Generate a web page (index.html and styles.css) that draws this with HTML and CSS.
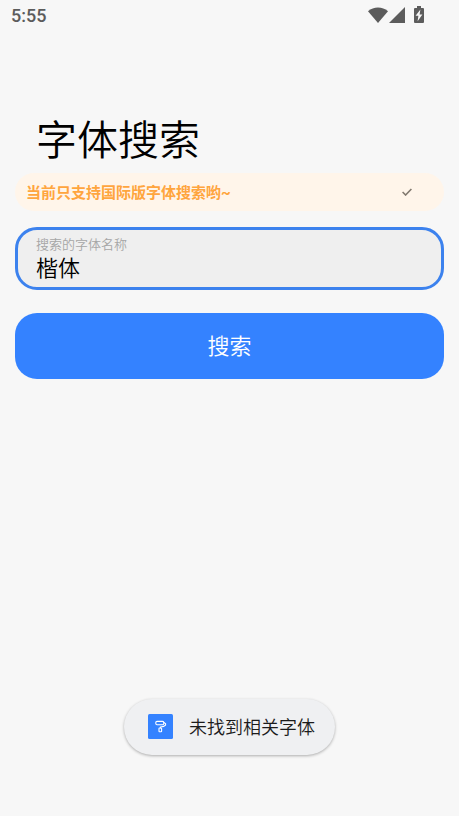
FILE: index.html
```html
<!DOCTYPE html>
<html lang="zh-CN">
<head>
<meta charset="utf-8">
<meta name="viewport" content="width=device-width, initial-scale=1">
<title>字体搜索</title>
<link rel="stylesheet" href="styles.css">
</head>
<body>
<header class="status">
  <time class="clock">5:55</time>
  <div class="status-icons">
    <svg class="wifi" width="20" height="16" viewBox="0 0 20 16"><path d="M0 4.2C5.7-.8 14.3-.8 20 4.2L10 16z"/></svg>
    <svg class="signal" width="16" height="16" viewBox="0 0 16 16"><path d="M16 0v16H0z"/></svg>
    <svg class="battery" width="10" height="18" viewBox="0 0 10 18"><path fill-rule="evenodd" d="M3 0h4v2h2a1 1 0 0 1 1 1v13a1 1 0 0 1-1 1H1a1 1 0 0 1-1-1V3a1 1 0 0 1 1-1h2zM6.4 3.6 1.6 9.8h2.8l-.8 5.4 4.8-6.6H5.6z"/></svg>
  </div>
</header>
<main class="page">
  <h1 class="title">字体搜索</h1>
  <div class="notice">
    <p class="notice-text">当前只支持国际版字体搜索哟~</p>
    <button class="dismiss" type="button" aria-label="知道了">
      <svg width="10" height="8" viewBox="0 0 10 8"><path d="M.6 4 3.6 7 9.4 1"/></svg>
    </button>
  </div>
  <form class="search">
    <div class="field">
      <label class="label" for="font-name">搜索的字体名称</label>
      <input class="input" id="font-name" type="text" value="楷体">
    </div>
    <button class="submit" type="button">搜索</button>
  </form>
</main>
<div class="toast" role="status">
  <svg class="app-icon" width="25" height="25" viewBox="0 0 25 25"><rect width="25" height="25" rx="1.5" fill="#3482ff"/><g fill="none" stroke="#fff" stroke-width="1.1" stroke-linejoin="round" stroke-linecap="round"><rect x="7.8" y="7.4" width="8" height="3.4" rx="1.2"/><path d="M15.8 8.4l1.8 1.4v1.2l-1.8 1.4-3.4.6v1"/><rect x="11" y="14" width="2.6" height="3.8" rx=".6"/></g></svg>
  <span>未找到相关字体</span>
</div>
</body>
</html>
```
FILE: styles.css
```css
* {
  box-sizing: border-box;
}

body {
  margin: 0;
  min-height: 100vh;
  display: flex;
  flex-direction: column;
  background: #f7f7f7;
  color: #000;
  font-family: Roboto, "Noto Sans CJK SC", sans-serif;
  font-weight: 350;
}

button,
input {
  font: inherit;
  border: 0;
  padding: 0;
}

.status {
  display: flex;
  align-items: center;
  justify-content: space-between;
  height: 31px;
  padding: 0 35px 0 11px;
  color: #5c5c5c;
}

.clock {
  font-size: 18px;
  font-weight: 500;
}

.status-icons {
  display: flex;
  align-items: center;
  padding-bottom: 1px;
  fill: #5c5c5c;
}

.signal {
  margin: 0 9px 0 1px;
}

.page {
  padding: 84px 15px 0;
}

.title {
  margin: 0;
  padding: 0 21px;
  font-size: 41px;
  line-height: 52px;
  font-weight: 350;
}

.notice {
  display: flex;
  align-items: center;
  justify-content: space-between;
  height: 38px;
  margin-top: 6px;
  padding: 0 24px 0 11px;
  border-radius: 19px;
  background: #fff5ea;
}

.notice-text {
  margin: 0;
  padding-bottom: 2px;
  color: #ffa53e;
  font-size: 15px;
  font-weight: 700;
}

.dismiss {
  display: grid;
  place-items: center;
  width: 26px;
  height: 26px;
  background: none;
}

.dismiss path {
  fill: none;
  stroke: #81796f;
  stroke-width: 1.6;
}

.search {
  display: grid;
  gap: 23px;
  margin-top: 16px;
}

.field {
  display: flex;
  flex-direction: column;
  height: 63px;
  padding: 6px 18px 4px;
  border: 3px solid #3c82ee;
  border-radius: 22px;
  background: #efefef;
}

.label {
  color: #a6a6a6;
  font-size: 13px;
  line-height: 17px;
}

.input {
  width: 100%;
  height: 26px;
  background: none;
  outline: none;
  color: #000;
  font-size: 22px;
}

.submit {
  height: 66px;
  padding-bottom: 4px;
  border-radius: 22px;
  background: #3482ff;
  color: #fff;
  font-size: 22px;
}

.toast {
  display: flex;
  align-items: center;
  gap: 16px;
  height: 56px;
  margin: auto auto 61px;
  padding: 0 20px 2px 24px;
  border-radius: 28px;
  background: #eff0f2;
  box-shadow: 0 1px 3px rgba(0, 0, 0, .3);
  color: #1b1b1b;
  font-size: 18px;
}
```
